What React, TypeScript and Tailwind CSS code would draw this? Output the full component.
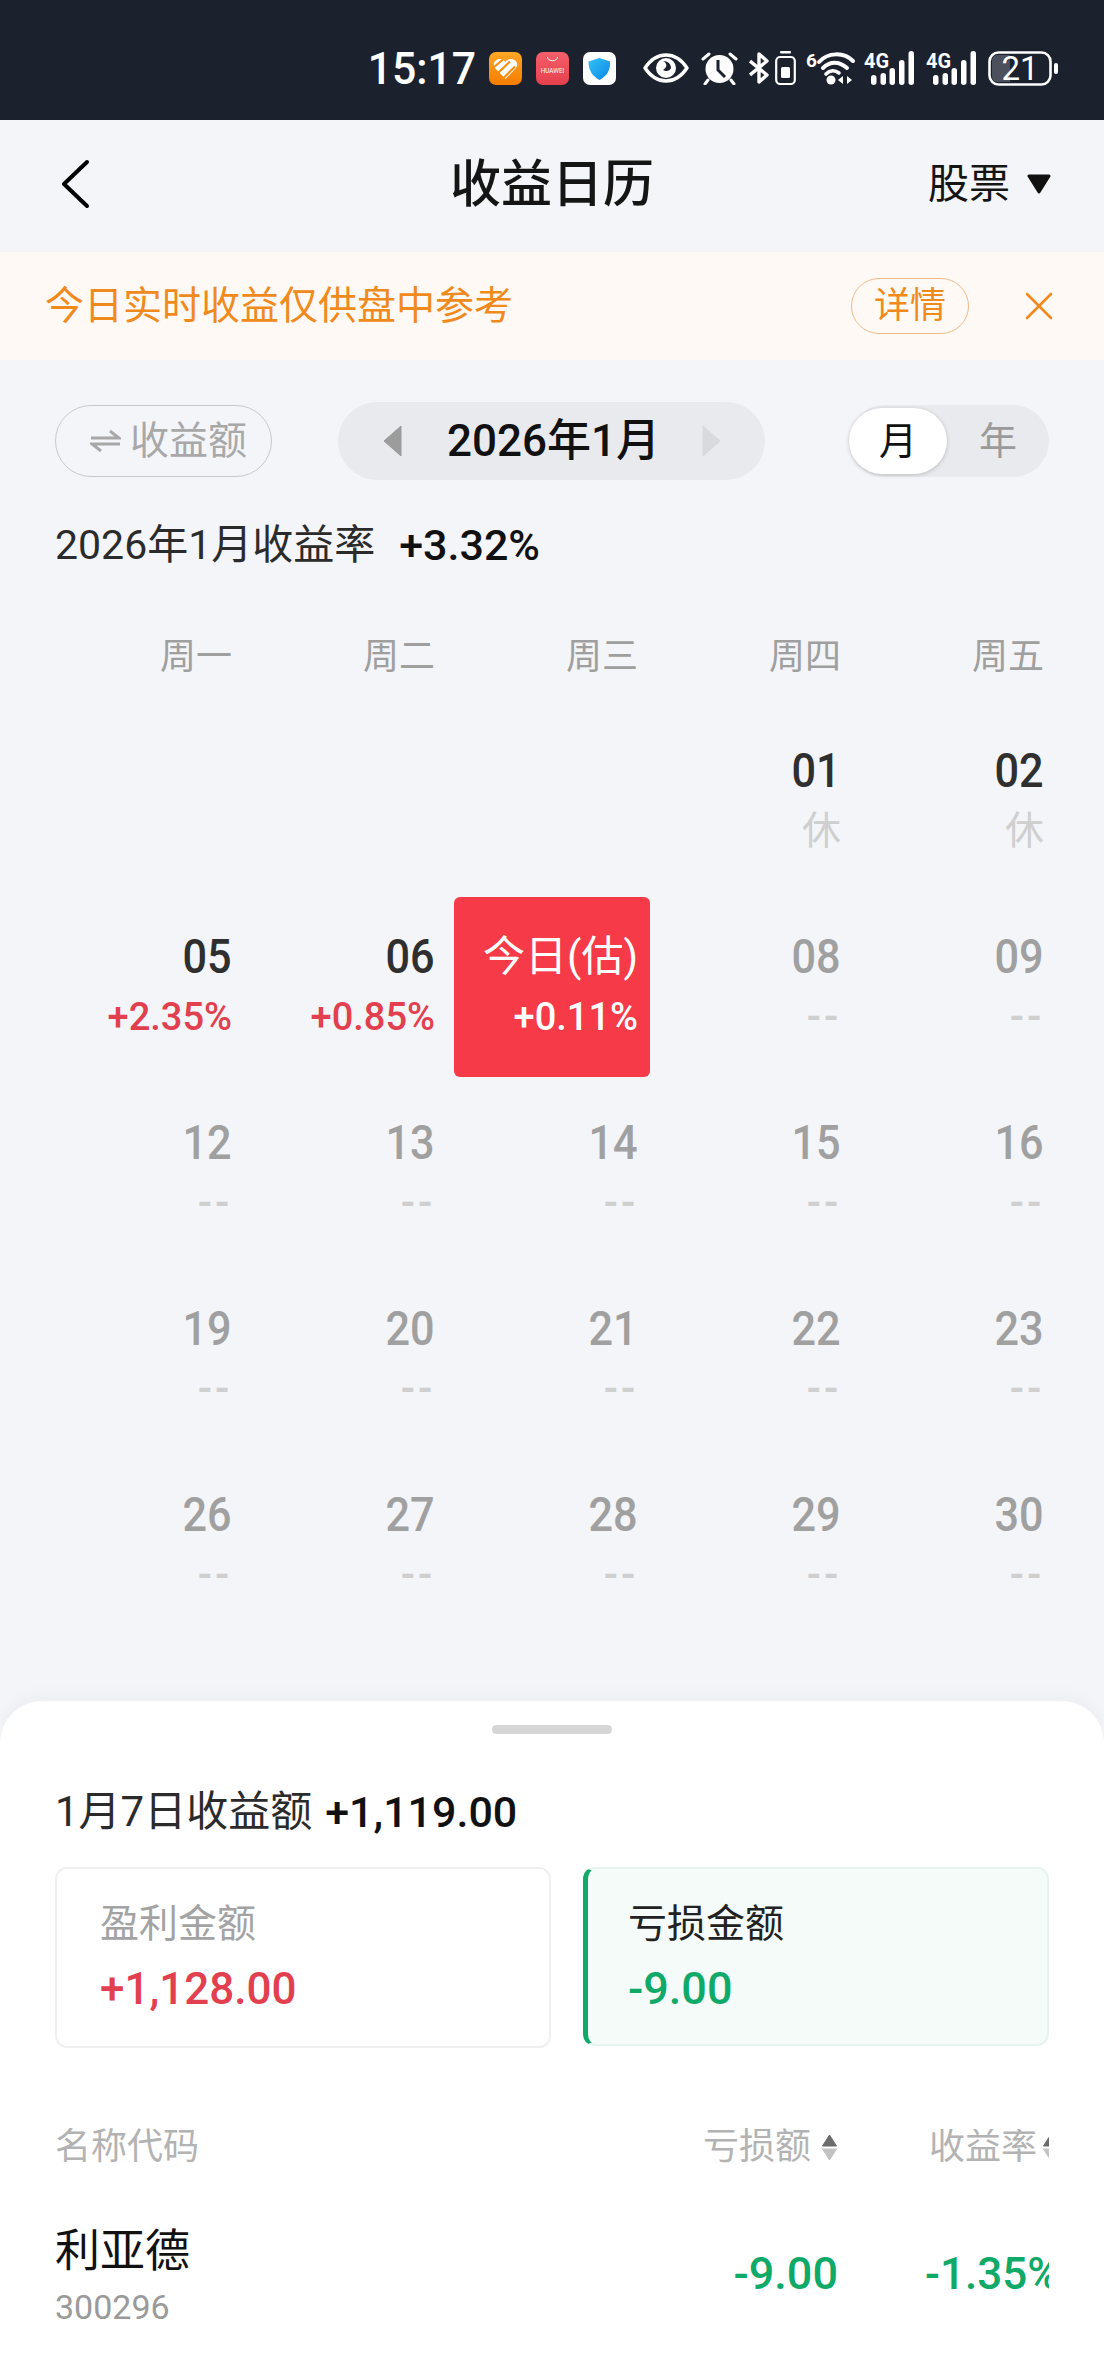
import { X } from 'lucide-react'

interface Day {
    date: string
    sub: string
    kind: 'empty' | 'rest' | 'up' | 'today' | 'future'
}

const future = (date: string): Day => ({ date, sub: '--', kind: 'future' })

const days: Day[] = [
    { date: '', sub: '', kind: 'empty' },
    { date: '', sub: '', kind: 'empty' },
    { date: '', sub: '', kind: 'empty' },
    { date: '01', sub: '休', kind: 'rest' },
    { date: '02', sub: '休', kind: 'rest' },
    { date: '05', sub: '+2.35%', kind: 'up' },
    { date: '06', sub: '+0.85%', kind: 'up' },
    { date: '今日(估)', sub: '+0.11%', kind: 'today' },
    future('08'),
    future('09'),
    ...['12', '13', '14', '15', '16', '19', '20', '21', '22', '23', '26', '27', '28', '29', '30'].map(future),
]

function HeartApp() {
    return (
        <svg width="33" height="33" viewBox="0 0 33 33">
            <defs>
                <linearGradient id="heartBg" x1="0" y1="0" x2="0" y2="1">
                    <stop offset="0" stopColor="#ffa726" />
                    <stop offset="1" stopColor="#f57c00" />
                </linearGradient>
            </defs>
            <rect width="33" height="33" rx="7" fill="url(#heartBg)" />
            <path d="M16.5 27 L6 16 C3 12 6 7 11 7 C13.5 7 15 8 16.5 10 C18 8 20 7 22 7 C27 7 30 12 27 16 Z" fill="#fff" />
            <path d="M5 15 L14 7.5 M9 21 L21 9.5 M14 26.5 L26 14.5" stroke="#f88f12" strokeWidth="2.2" />
        </svg>
    )
}

function HuaweiApp() {
    return (
        <svg width="33" height="33" viewBox="0 0 33 33">
            <defs>
                <linearGradient id="hwBg" x1="0" y1="0" x2="0" y2="1">
                    <stop offset="0" stopColor="#f4606a" />
                    <stop offset="1" stopColor="#e63f4d" />
                </linearGradient>
            </defs>
            <rect width="33" height="33" rx="7" fill="url(#hwBg)" />
            <path d="M11.5 5 C12 10 21 10 21.5 5" stroke="#fff" strokeWidth="1" fill="none" />
            <text x="16.5" y="20.5" textAnchor="middle" fontSize="6.4" fill="#fff" fontFamily="Roboto, sans-serif">HUAWEI</text>
        </svg>
    )
}

function ShieldApp() {
    return (
        <svg width="33" height="33" viewBox="0 0 33 33">
            <defs>
                <linearGradient id="shieldBg" x1="0" y1="0" x2="1" y2="1">
                    <stop offset="0" stopColor="#35c4f5" />
                    <stop offset="1" stopColor="#0a84e8" />
                </linearGradient>
            </defs>
            <rect width="33" height="33" rx="7" fill="#fff" />
            <path d="M16.5 6 L27 9.5 C27.5 18 24 24 16.5 28 C9 24 5.5 18 5.5 9.5 Z" fill="url(#shieldBg)" />
        </svg>
    )
}

function EyeIcon() {
    return (
        <svg width="46" height="30" viewBox="0 0 46 30">
            <path d="M2 15 C8 6 15 2 23 2 C31 2 38 6 44 15 C38 24 31 28 23 28 C15 28 8 24 2 15 Z" fill="none" stroke="#fff" strokeWidth="3.4" strokeLinejoin="round" />
            <circle cx="23" cy="15" r="10" fill="#fff" />
            <path d="M20 8 C24 10 25 14 20 17 C23 19 27 18 28 15 C28 11 25 8 20 8 Z" fill="#1c212e" />
        </svg>
    )
}

function AlarmIcon() {
    return (
        <svg width="37" height="33" viewBox="0 0 37 33">
            <circle cx="18.5" cy="17" r="14" fill="#fff" />
            <path d="M17 8 V18 L24 25" fill="none" stroke="#1c212e" strokeWidth="3" />
            <path d="M2 7 L8 2 M35 7 L29 2 M7 28 L4 32 M30 28 L33 32" stroke="#fff" strokeWidth="3" strokeLinecap="round" />
        </svg>
    )
}

function BluetoothIcon() {
    return (
        <svg width="22" height="32" viewBox="0 0 22 32">
            <path d="M1 9 L18 23 L10 30 V2 L18 9 L1 23" fill="none" stroke="#fff" strokeWidth="3.4" strokeLinejoin="round" />
        </svg>
    )
}

function BatterySaver() {
    return (
        <svg width="21" height="34" viewBox="0 0 21 34">
            <rect x="5" y="0" width="11" height="2.5" rx="1" fill="#fff" />
            <rect x="1.2" y="6" width="18.6" height="27" rx="4" fill="none" stroke="#fff" strokeWidth="2.2" />
            <rect x="6" y="16" width="9" height="11" rx="1.5" fill="#fff" />
        </svg>
    )
}

function WifiIcon() {
    return (
        <svg className="overflow-visible" width="48" height="34" viewBox="0 0 48 34">
            <text x="0" y="16" fontSize="19" fontWeight="700" fill="#fff" fontFamily="Roboto, sans-serif">6</text>
            <path d="M13 11 C22 1 38 1 47 10" fill="none" stroke="#fff" strokeWidth="4" strokeLinecap="round" />
            <path d="M17 17 C24 10 33 10 41 17" fill="none" stroke="#fff" strokeWidth="4" strokeLinecap="round" />
            <path d="M20 23 C24 19 29 19 33 22" fill="none" stroke="#fff" strokeWidth="3.6" strokeLinecap="round" />
            <circle cx="25" cy="29" r="4.5" fill="#fff" />
            <path d="M37 25 V33 L32 29 Z M41 25 V33 L46 29 Z" fill="#fff" />
        </svg>
    )
}

function SignalIcon() {
    return (
        <svg className="overflow-visible" width="50" height="34" viewBox="0 0 50 34">
            <text x="0" y="17" fontSize="20" fontWeight="700" fill="#fff" fontFamily="Roboto, sans-serif">4G</text>
            <rect x="7" y="24" width="5.5" height="10" rx="2.7" fill="#fff" />
            <rect x="16.5" y="22" width="5.5" height="12" rx="2.7" fill="#fff" />
            <rect x="25.5" y="17" width="5.5" height="17" rx="2.7" fill="#fff" />
            <rect x="35" y="9" width="5.5" height="25" rx="2.7" fill="#fff" />
            <rect x="44.5" y="0" width="5.5" height="34" rx="2.7" fill="#fff" />
        </svg>
    )
}

function BatteryIcon() {
    return (
        <svg className="overflow-visible" width="70" height="35" viewBox="0 0 70 35">
            <rect x="1.5" y="1.5" width="61" height="32" rx="9" fill="#1c212e" stroke="#fff" strokeWidth="2.6" />
            <path d="M4 10 C4 6 6 4 10 4 H22 V31 H10 C6 31 4 29 4 25 Z" fill="#4c4f5c" />
            <text x="32" y="29" textAnchor="middle" fontSize="33" fill="#fff" fontFamily="Roboto, sans-serif">21</text>
            <rect x="66" y="12" width="4" height="11" rx="2" fill="#fff" />
        </svg>
    )
}

function SortIcon() {
    return (
        <svg width="17" height="27" viewBox="0 0 17 27">
            <path d="M8.5 1 L15.5 12 H1.5 Z" fill="#6b6b6b" stroke="#6b6b6b" strokeLinejoin="round" />
            <path d="M8.5 26 L15.5 15 H1.5 Z" fill="#c2c2c2" stroke="#c2c2c2" strokeLinejoin="round" />
        </svg>
    )
}

function DayCell({ day }: { day: Day }) {
    if (day.kind === 'empty') return <div />

    const dateColor = day.kind === 'future' ? 'text-[#a0a0a0]' : day.kind === 'today' ? 'text-white' : 'text-[#2f2f2f]'
    const subColor =
        day.kind === 'up'
            ? 'text-[#e2404f]'
            : day.kind === 'today'
              ? 'text-white'
              : 'text-[#cfcfcf]'

    return (
        <div className={`ml-auto flex h-[180px] w-[196px] flex-col items-end rounded-[6px] pr-[12px] pt-[35px] ${day.kind === 'today' ? 'bg-[#f73a47]' : ''}`}>
            <div className={`whitespace-nowrap leading-[50px] ${day.kind === 'today' ? 'text-[42px]' : 'origin-right scale-x-90 text-[48px] font-medium'} ${dateColor}`}>{day.date}</div>
            <div className={`mt-[10px] whitespace-nowrap leading-[50px] ${day.kind === 'future' ? 'text-[39px] font-bold tracking-[2px]' : day.kind === 'rest' ? 'text-[39px]' : 'text-[38px] font-medium'} ${subColor}`}>{day.sub}</div>
        </div>
    )
}

export default function App() {
    return (
        <div className="flex h-[2376px] w-[1104px] flex-col overflow-hidden bg-[#f4f5f9] font-['Roboto','Noto_Sans_CJK_SC',sans-serif]">
            <div className="flex h-[120px] shrink-0 items-center justify-end bg-[#1c212e] pr-[46px] pt-[16px]">
                <span className="origin-right scale-x-95 text-[45px] font-medium leading-none text-white">15:17</span>
                <div className="ml-[13px]"><HeartApp /></div>
                <div className="ml-[14px]"><HuaweiApp /></div>
                <div className="ml-[14px]"><ShieldApp /></div>
                <div className="ml-[27px]"><EyeIcon /></div>
                <div className="ml-[12px]"><AlarmIcon /></div>
                <div className="ml-[11px]"><BluetoothIcon /></div>
                <div className="ml-[4px]"><BatterySaver /></div>
                <div className="ml-[10px]"><WifiIcon /></div>
                <div className="ml-[10px]"><SignalIcon /></div>
                <div className="ml-[12px]"><SignalIcon /></div>
                <div className="ml-[12px]"><BatteryIcon /></div>
            </div>

            <div className="grid h-[132px] shrink-0 grid-cols-[1fr_auto_1fr] items-center pb-[4px]">
                <svg className="ml-[60px]" width="30" height="50" viewBox="0 0 30 50">
                    <path d="M27 3 L4 25 L27 47" fill="none" stroke="#000" strokeWidth="4" strokeLinecap="round" strokeLinejoin="round" />
                </svg>
                <h1 className="text-[51px] font-medium leading-none text-[#151515]">收益日历</h1>
                <div className="flex items-center justify-end pr-[53px]">
                    <span className="text-[41px] leading-none text-[#151515]">股票</span>
                    <svg className="ml-[17px]" width="24" height="20" viewBox="0 0 24 20">
                        <path d="M2 2 H22 L12 18 Z" fill="#111" stroke="#111" strokeWidth="3" strokeLinejoin="round" />
                    </svg>
                </div>
            </div>

            <div className="flex h-[108px] shrink-0 items-center bg-[#fef9f5] pl-[45px] pr-[41px]">
                <span className="text-[39px] leading-none text-[#f08a1d]">今日实时收益仅供盘中参考</span>
                <span className="ml-auto flex h-[56px] w-[118px] items-center justify-center rounded-full border border-[#eebb88] text-[36px] leading-none text-[#f08a1d]">详情</span>
                <X className="ml-[46px] h-[48px] w-[48px] text-[#f08a1d]" strokeWidth={1.3} />
            </div>

            <div className="mt-[42px] flex h-[78px] shrink-0 items-center pl-[55px] pr-[55px]">
                <div className="flex h-[72px] w-[217px] items-center rounded-full border border-[#c8c9cd] pl-[34px]">
                    <svg width="31" height="24" viewBox="0 0 31 24">
                        <path d="M1 9 H29 L20 2 M30 15 H2 L11 22" fill="none" stroke="#a8a8a8" strokeWidth="3" />
                    </svg>
                    <span className="ml-[9px] text-[39px] leading-none text-[#a8a8a8]">收益额</span>
                </div>
                <div className="ml-[66px] flex h-[78px] w-[427px] items-center rounded-full bg-[#e9eaee] pl-[44px] pr-[43px]">
                    <svg width="20" height="32" viewBox="0 0 20 32">
                        <path d="M19 1 V31 L2 16 Z" fill="#9c9c9c" stroke="#9c9c9c" strokeLinejoin="round" />
                    </svg>
                    <span className="ml-[45px] text-[44px] font-medium leading-none text-[#111]">2026年1月</span>
                    <svg className="ml-auto" width="20" height="32" viewBox="0 0 20 32">
                        <path d="M1 1 V31 L18 16 Z" fill="#d9dade" stroke="#d9dade" strokeLinejoin="round" />
                    </svg>
                </div>
                <div className="ml-auto flex h-[72px] w-[200px] items-center rounded-full bg-[#e9eaee]">
                    <span className="flex h-[66px] w-[98px] items-center justify-center rounded-full bg-white text-[38px] leading-none text-[#111] shadow-[0_1px_4px_rgba(0,0,0,0.2)]">月</span>
                    <span className="flex-1 text-center text-[38px] leading-none text-[#9a9a9a]">年</span>
                </div>
            </div>

            <div className="mt-[40px] flex h-[50px] shrink-0 items-center pl-[55px]">
                <span className="text-[41px] leading-none text-[#2b2b2b]">2026年1月收益率</span>
                <span className="ml-[24px] text-[43px] font-medium leading-none text-[#111]">+3.32%</span>
            </div>

            <div className="mr-[55px] mt-[62px] shrink-0 overflow-hidden">
                <div className="ml-[41px] grid w-[1015px] grid-cols-[repeat(5,203px)] pb-[29px]">
                    {['周一', '周二', '周三', '周四', '周五'].map((w) => (
                        <div key={w} className="pr-[12px] text-right text-[36px] leading-[50px] text-[#9f9f9f]">{w}</div>
                    ))}
                </div>
                <div className="ml-[41px] grid w-[1015px] grid-cols-[repeat(5,203px)] gap-y-[6px]">
                    {days.map((d, i) => (
                        <DayCell key={i} day={d} />
                    ))}
                </div>
            </div>

            <div className="mt-[66px] flex-1 rounded-t-[42px] bg-white px-[55px] pt-[24px] shadow-[0_-6px_18px_rgba(0,0,0,0.03)]">
                <div className="mx-auto h-[9px] w-[120px] rounded-full bg-[#d6d6d6]" />

                <div className="mt-[53px] flex h-[50px] items-center">
                    <span className="text-[42px] leading-none text-[#2b2b2b]">1月7日收益额</span>
                    <span className="ml-[13px] text-[43px] font-medium leading-none text-[#111]">+1,119.00</span>
                </div>

                <div className="mt-[30px] flex items-start gap-[32px]">
                    <div className="h-[181px] w-[496px] rounded-[12px] border-2 border-[#f0f0f0] pl-[43px] pt-[30px]">
                        <div className="text-[39px] leading-[50px] text-[#a3a3a3]">盈利金额</div>
                        <div className="mt-[15px] text-[44px] font-medium leading-[50px] text-[#e2404f]">+1,128.00</div>
                    </div>
                    <div className="h-[179px] flex-1 rounded-[12px] border-2 border-l-[5px] border-[#e6f4ee] border-l-[#0fa968] bg-[#f4fbf8] pl-[40px] pt-[30px]">
                        <div className="text-[39px] leading-[50px] text-[#222]">亏损金额</div>
                        <div className="mt-[15px] text-[45px] font-medium leading-[50px] text-[#0fa968]">-9.00</div>
                    </div>
                </div>

                <div className="mt-[74px] flex h-[50px] items-center text-[36px] leading-none text-[#b3b3b3]">
                    <span>名称代码</span>
                    <div className="ml-auto flex w-[135px] items-center justify-between">
                        <span className="whitespace-nowrap">亏损额</span>
                        <SortIcon />
                    </div>
                    <div className="ml-[87px] flex w-[124px] items-center overflow-hidden pl-[4px]">
                        <span className="whitespace-nowrap">收益率</span>
                        <div className="ml-[5px] shrink-0"><SortIcon /></div>
                    </div>
                </div>

                <div className="mt-[48px] flex items-start">
                    <div>
                        <div className="text-[45px] leading-[64px] text-[#111]">利亚德</div>
                        <div className="mt-[3px] text-[34px] leading-[40px] text-[#9a9a9a]">300296</div>
                    </div>
                    <div className="ml-auto mt-[24px] text-[45px] font-medium leading-[60px] text-[#0fa968]">-9.00</div>
                    <div className="ml-[87px] mt-[24px] w-[124px] overflow-hidden whitespace-nowrap text-[44px] font-medium leading-[60px] text-[#0fa968]">-1.35%</div>
                </div>
            </div>
        </div>
    )
}
